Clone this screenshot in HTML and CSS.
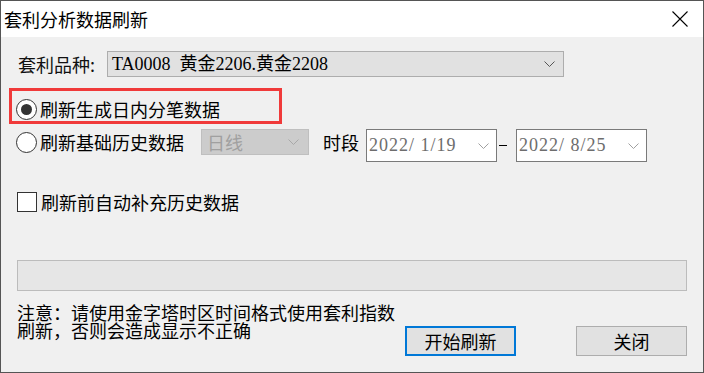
FILE: index.html
```html
<!DOCTYPE html>
<html lang="zh-CN">
<head>
<meta charset="utf-8">
<title>套利分析数据刷新</title>
<link rel="stylesheet" href="styles.css">
</head>
<body>
<div class="window">
  <div class="titlebar">
    <span class="title">套利分析数据刷新</span>
    <svg class="close" width="16" height="16" viewBox="0 0 16 16"><path d="M0.5 0.5 L15.5 15.5 M15.5 0.5 L0.5 15.5" stroke="#000" stroke-width="1.1" fill="none"/></svg>
  </div>
  <div class="content">
    <div class="row-variety">
      <span class="label">套利品种:</span>
      <div class="combo">
        <span class="combo-text">TA0008  黄金2206.黄金2208</span>
        <svg class="chev" width="11" height="6" viewBox="0 0 11 6"><path d="M0.5 0.5 L5.5 5.5 L10.5 0.5" stroke="#555" stroke-width="1" fill="none"/></svg>
      </div>
    </div>
    <div class="highlight">
      <span class="radio checked"></span>
      <span class="opt-text">刷新生成日内分笔数据</span>
    </div>
    <div class="row-history">
      <span class="radio"></span>
      <span class="opt-text hist">刷新基础历史数据</span>
      <div class="combo disabled">
        <span class="combo-text">日线</span>
        <svg class="chev" width="11" height="6" viewBox="0 0 11 6"><path d="M0.5 0.5 L5.5 5.5 L10.5 0.5" stroke="#a8a8a8" stroke-width="1" fill="none"/></svg>
      </div>
      <span class="period">时段</span>
      <div class="date first">
        <span class="date-text">2022/ 1/19</span>
        <svg class="chev" width="11" height="6" viewBox="0 0 11 6"><path d="M0.5 0.5 L5.5 5.5 L10.5 0.5" stroke="#a0a0a0" stroke-width="1" fill="none"/></svg>
      </div>
      <span class="dash"></span>
      <div class="date second">
        <span class="date-text">2022/ 8/25</span>
        <svg class="chev" width="11" height="6" viewBox="0 0 11 6"><path d="M0.5 0.5 L5.5 5.5 L10.5 0.5" stroke="#a0a0a0" stroke-width="1" fill="none"/></svg>
      </div>
    </div>
    <div class="row-check">
      <span class="checkbox"></span>
      <span class="check-text">刷新前自动补充历史数据</span>
    </div>
    <div class="progress"></div>
    <div class="footer">
      <p class="note">注意：请使用金字塔时区时间格式使用套利指数刷新，否则会造成显示不正确</p>
      <div class="buttons">
        <button class="btn primary">开始刷新</button>
        <button class="btn secondary">关闭</button>
      </div>
    </div>
  </div>
</div>
</body>
</html>
```
FILE: styles.css
```css
* { box-sizing: border-box; }
html, body { margin: 0; padding: 0; }
body {
  font-family: "Liberation Serif", "Noto Sans CJK SC", serif;
  font-size: 18px;
  color: #000;
  background: #f0f0f0;
}
.window {
  width: 704px;
  height: 373px;
  border: 1px solid #555;
  background: #f0f0f0;
  overflow: hidden;
}
.titlebar {
  height: 36px;
  background: #fff;
  display: flex;
  align-items: center;
  justify-content: space-between;
  padding: 0 15px 0 3px;
}
.title {
  font-family: "Noto Sans CJK SC", sans-serif;
  font-size: 18px;
  line-height: 36px;
}
.close { display: block; }
.content { padding-top: 14px; }

.row-variety {
  display: flex;
  padding-left: 17px;
  height: 26px;
}
.label {
  width: 89px;
  line-height: 26px;
  font-family: "Noto Sans CJK SC", sans-serif;
  color: #111;
}
.combo {
  width: 457px;
  height: 26px;
  background: #e1e1e1;
  border: 1px solid #adadad;
  display: flex;
  align-items: center;
  justify-content: space-between;
  padding: 0 8px 0 4px;
}
.combo-text { line-height: 24px; white-space: pre; }
.chev { display: block; }

.highlight {
  margin: 11px 0 0 8px;
  width: 273px;
  height: 36px;
  border: 3px solid #f03a3a;
  display: flex;
  align-items: flex-start;
  padding: 8px 0 0 4px;
}
.radio {
  width: 21px;
  height: 21px;
  border: 1px solid #333;
  border-radius: 50%;
  background: #fff;
  flex: none;
  display: flex;
  align-items: center;
  justify-content: center;
}
.radio.checked::after {
  content: "";
  width: 11px;
  height: 11px;
  border-radius: 50%;
  background: #333;
}
.opt-text {
  margin-left: 3px;
  line-height: 21px;
  font-family: "Noto Sans CJK SC", sans-serif;
}

.row-history {
  display: flex;
  align-items: flex-start;
  margin-top: 5px;
  padding-left: 15px;
  height: 33px;
}
.row-history .radio { margin-top: 3px; }
.opt-text.hist { line-height: 26px; width: 144px; }
.combo.disabled {
  margin-left: 17px;
  width: 108px;
  background: #cccccc;
  border-color: #bfbfbf;
  padding: 0 9px 0 5px;
}
.combo.disabled .combo-text {
  color: #a0a0a0;
  font-family: "Noto Sans CJK SC", sans-serif;
}
.period {
  margin-left: 14px;
  line-height: 26px;
  width: 36px;
  font-family: "Noto Sans CJK SC", sans-serif;
}
.date {
  width: 131px;
  height: 33px;
  background: #fff;
  border: 1px solid #7a7a7a;
  display: flex;
  align-items: center;
  justify-content: space-between;
  padding: 0 7px 0 2px;
}
.date.first { margin-left: 7px; }
.date.second { margin-left: 9px; }
.date-text {
  color: #6d6d6d;
  letter-spacing: 1px;
  white-space: pre;
  line-height: 31px;
}
.dash {
  width: 8px;
  height: 1px;
  margin: 16px 0 0 2px;
  background: #000;
}

.row-check {
  display: flex;
  align-items: center;
  margin-top: 30px;
  padding-left: 16px;
  height: 20px;
}
.checkbox {
  width: 20px;
  height: 20px;
  border: 1px solid #333;
  background: #fff;
}
.check-text {
  margin-left: 4px;
  line-height: 20px;
  font-family: "Noto Sans CJK SC", sans-serif;
}

.progress {
  margin: 48px 0 0 16px;
  width: 670px;
  height: 31px;
  background: #e6e6e6;
  border: 1px solid #bcbcbc;
}

.footer {
  display: flex;
  align-items: flex-start;
  margin-top: 12px;
  padding-left: 16px;
}
.note {
  margin: 0;
  width: 388px;
  line-height: 18px;
  font-family: "Noto Sans CJK SC", sans-serif;
  padding-right: 8px;
}
.buttons {
  display: flex;
  margin-top: 23px;
}
.btn {
  width: 111px;
  height: 30px;
  background: #e1e1e1;
  font-family: "Noto Sans CJK SC", sans-serif;
  font-size: 18px;
  line-height: 26px;
  color: #000;
  padding: 0;
}
.btn.primary { border: 2px solid #0078d7; }
.btn.secondary {
  border: 1px solid #adadad;
  margin-left: 60px;
}
```
